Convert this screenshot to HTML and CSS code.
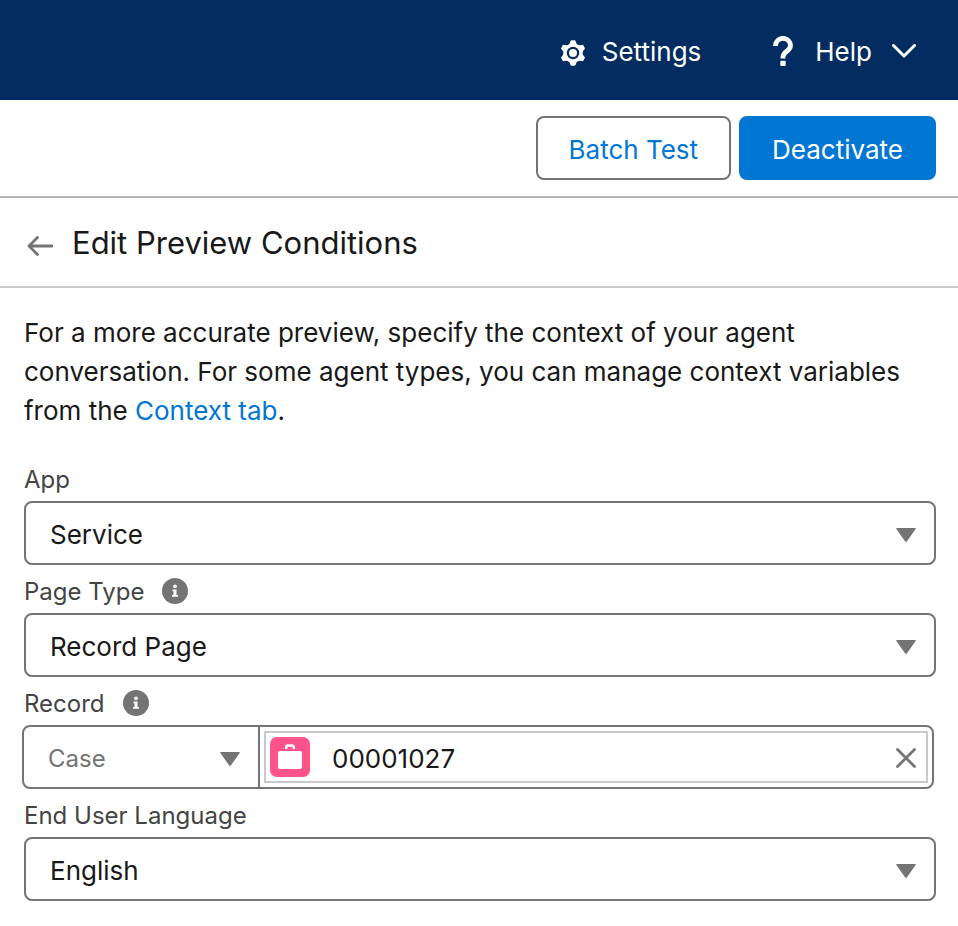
FILE: index.html
```html
<!DOCTYPE html>
<html lang="en">
<head>
<meta charset="utf-8">
<meta name="viewport" content="width=device-width, initial-scale=1">
<title>Edit Preview Conditions</title>
<link rel="stylesheet" href="styles.css">
</head>
<body>
<header class="topbar">
  <a class="topbar-link" href="#settings">
    <svg class="gear" viewBox="0 0 26 26" aria-hidden="true">
      <circle cx="13" cy="13" r="8" fill="none" stroke="currentColor" stroke-width="3.600"/>
      <g fill="currentColor">
        <path id="tooth" d="M9 5 10.300 1.500Q10.600.2 11.800.2h2.400q1.200 0 1.500 1.300L17 5z"/>
        <use href="#tooth" transform="rotate(60 13 13)"/>
        <use href="#tooth" transform="rotate(120 13 13)"/>
        <use href="#tooth" transform="rotate(180 13 13)"/>
        <use href="#tooth" transform="rotate(240 13 13)"/>
        <use href="#tooth" transform="rotate(300 13 13)"/>
        <circle cx="13" cy="13" r="4"/>
      </g>
    </svg>
    <span>Settings</span>
  </a>
  <button class="topbar-link" type="button">
    <svg class="question" viewBox="0 0 20 30" aria-hidden="true">
      <path d="M2.500 10V9.500a7.500 7.200 0 0 1 15 0c0 6-7.500 5.500-7.500 11.500v1.500" fill="none" stroke="currentColor" stroke-width="4.800"/>
      <rect x="7.300" y="24.800" width="5.400" height="5.200" rx="1" fill="currentColor"/>
    </svg>
    <span>Help</span>
    <svg class="chevron" viewBox="0 0 24 14" aria-hidden="true">
      <path d="M1.500 1.500 12 12 22.500 1.500" fill="none" stroke="currentColor" stroke-width="3" stroke-linecap="round" stroke-linejoin="round"/>
    </svg>
  </button>
</header>

<div class="actions">
  <button class="btn btn-neutral" type="button">Batch Test</button>
  <button class="btn btn-brand" type="button">Deactivate</button>
</div>

<main>
  <div class="panel-head">
    <button class="back" type="button" aria-label="Back">
      <svg viewBox="0 0 26 20" aria-hidden="true">
        <path d="M25 10H2M10.500 1.500 2 10l8.500 8.500" fill="none" stroke="currentColor" stroke-width="2.800" stroke-linecap="round" stroke-linejoin="round"/>
      </svg>
    </button>
    <h1>Edit Preview Conditions</h1>
  </div>

  <form class="panel-body">
    <p class="intro">For a more accurate preview, specify the context of your agent conversation. For some agent types, you can manage context variables from the <a href="#context">Context tab</a>.</p>

    <div class="label-row"><label for="app">App</label></div>
    <div class="select-wrap">
      <select id="app"><option>Service</option></select>
      <svg class="caret" viewBox="0 0 20 14" aria-hidden="true"><path d="M.8 0h18.400q1 .3.400 1L11 13.300q-1 1-2 0L.4 1Q-.2.3.8 0z"/></svg>
    </div>

    <div class="label-row">
      <label for="page-type">Page Type</label>
      <svg class="info" viewBox="0 0 26 26" aria-hidden="true"><circle cx="13" cy="13" r="13"/><circle class="info-mark" cx="13" cy="8.300" r="1.900"/><path class="info-mark" d="M10.500 11.500h4v5.500H16v1.800h-6V17h1.500v-3.700h-1z"/></svg>
    </div>
    <div class="select-wrap">
      <select id="page-type"><option>Record Page</option></select>
      <svg class="caret" viewBox="0 0 20 14" aria-hidden="true"><path d="M.8 0h18.400q1 .3.400 1L11 13.300q-1 1-2 0L.4 1Q-.2.3.8 0z"/></svg>
    </div>

    <div class="label-row">
      <label for="record">Record</label>
      <svg class="info" viewBox="0 0 26 26" aria-hidden="true"><circle cx="13" cy="13" r="13"/><circle class="info-mark" cx="13" cy="8.300" r="1.900"/><path class="info-mark" d="M10.500 11.500h4v5.500H16v1.800h-6V17h1.500v-3.700h-1z"/></svg>
    </div>
    <div class="lookup">
      <div class="select-wrap lookup-type">
        <select aria-label="Object"><option>Case</option></select>
        <svg class="caret" viewBox="0 0 20 14" aria-hidden="true"><path d="M.8 0h18.400q1 .3.400 1L11 13.300q-1 1-2 0L.4 1Q-.2.3.8 0z"/></svg>
      </div>
      <div class="lookup-value">
        <svg class="case-icon" viewBox="0 0 40 40" aria-hidden="true">
          <rect width="40" height="40" rx="7" fill="#ff538a"/>
          <path d="M16.200 11v-.5q0-2 2-2h3.600q2 0 2 2v.5" fill="none" stroke="#fff" stroke-width="2.600" stroke-linecap="round"/>
          <rect x="8" y="14" width="24" height="18" rx="2" fill="#fff"/>
        </svg>
        <input id="record" type="text" value="00001027">
        <button class="clear" type="button" aria-label="Clear record">
          <svg viewBox="0 0 20 20" aria-hidden="true"><path d="M1.500 1.500l17 17M18.500 1.500l-17 17" fill="none" stroke="currentColor" stroke-width="2.800" stroke-linecap="round"/></svg>
        </button>
      </div>
    </div>

    <div class="label-row"><label for="language">End User Language</label></div>
    <div class="select-wrap">
      <select id="language"><option>English</option></select>
      <svg class="caret" viewBox="0 0 20 14" aria-hidden="true"><path d="M.8 0h18.400q1 .3.400 1L11 13.300q-1 1-2 0L.4 1Q-.2.3.8 0z"/></svg>
    </div>
  </form>
</main>
</body>
</html>
```
FILE: styles.css
```css
* {
  box-sizing: border-box;
}

body {
  margin: 0;
  background: #fff;
  color: #181818;
  font-family: Inter, "Liberation Sans", sans-serif;
  font-size: 26px;
  line-height: 39px;
}

button,
input,
select {
  margin: 0;
  padding: 0;
  border: 0;
  background: none;
  color: inherit;
  font: inherit;
}

svg {
  display: block;
  flex: none;
}

a {
  color: #0176d3;
  text-decoration: none;
}

.topbar {
  display: flex;
  justify-content: flex-end;
  gap: 72px;
  height: 100px;
  padding: 2px 42px 0;
  background: #032d60;
}

.topbar-link {
  display: flex;
  align-items: center;
  color: #fff;
}

.gear {
  width: 26px;
  height: 26px;
  margin: 4px 16px 0 0;
}

.question {
  width: 20px;
  height: 30px;
  margin-right: 22px;
}

.chevron {
  width: 24px;
  height: 14px;
  margin-left: 20px;
}

.actions {
  display: flex;
  justify-content: flex-end;
  gap: 8px;
  padding: 16px 22px;
  border-bottom: 2px solid #b4b4b4;
}

.btn {
  height: 64px;
  padding: 2px 31px 0;
  border: 2px solid #747474;
  border-radius: 8px;
}

.btn-neutral {
  color: #0176d3;
}

.btn-brand {
  border-color: #0176d3;
  background: #0176d3;
  color: #fff;
}

.panel-head {
  display: flex;
  align-items: center;
  gap: 19px;
  height: 90px;
  padding: 2px 27px 0;
  border-bottom: 2px solid #c9c9c9;
}

.back {
  padding-top: 5px;
  color: #747474;
}

.back svg {
  width: 26px;
  height: 20px;
}

h1 {
  margin: 0;
  font-size: 31px;
  font-weight: 400;
  line-height: 40px;
}

.panel-body {
  padding: 25px 22px 24px 24px;
}

.intro {
  margin: 0 0 23px;
}

.label-row {
  display: flex;
  align-items: center;
  gap: 18px;
  height: 48px;
  padding-top: 4px;
  color: #444;
  font-size: 24px;
}

.info {
  width: 26px;
  height: 26px;
  fill: #747474;
}

.info-mark {
  fill: #fff;
}

.select-wrap {
  display: grid;
  align-items: center;
}

.select-wrap > * {
  grid-area: 1 / 1;
}

.select-wrap select {
  width: 100%;
  height: 64px;
  padding: 2px 24px 0;
  border: 2px solid #747474;
  border-radius: 8px;
  appearance: none;
}

.caret {
  justify-self: end;
  width: 20px;
  height: 14px;
  margin: 4px 20px 0 0;
  fill: #747474;
  pointer-events: none;
}

.lookup {
  display: flex;
  height: 64px;
  margin: 0 2px 0 -2px;
  border: 2px solid #747474;
  border-radius: 8px;
}

.lookup-type {
  flex: 0 0 236px;
  border-right: 2px solid #747474;
  color: #747474;
  font-size: 24px;
}

.lookup-type select {
  height: 60px;
  border: 0;
}

.lookup-type .caret {
  margin-right: 18px;
}

.lookup-value {
  display: flex;
  flex: 1;
  align-items: center;
  min-width: 0;
  margin: 4px;
  padding: 0 10px 0 4px;
  border: 2px solid #c9c9c9;
}

.case-icon {
  width: 40px;
  height: 40px;
}

.lookup-value input {
  flex: 1;
  min-width: 0;
  padding: 2px 22px 0;
}

.clear {
  padding-top: 2px;
  color: #747474;
}

.clear svg {
  width: 20px;
  height: 20px;
}
```
